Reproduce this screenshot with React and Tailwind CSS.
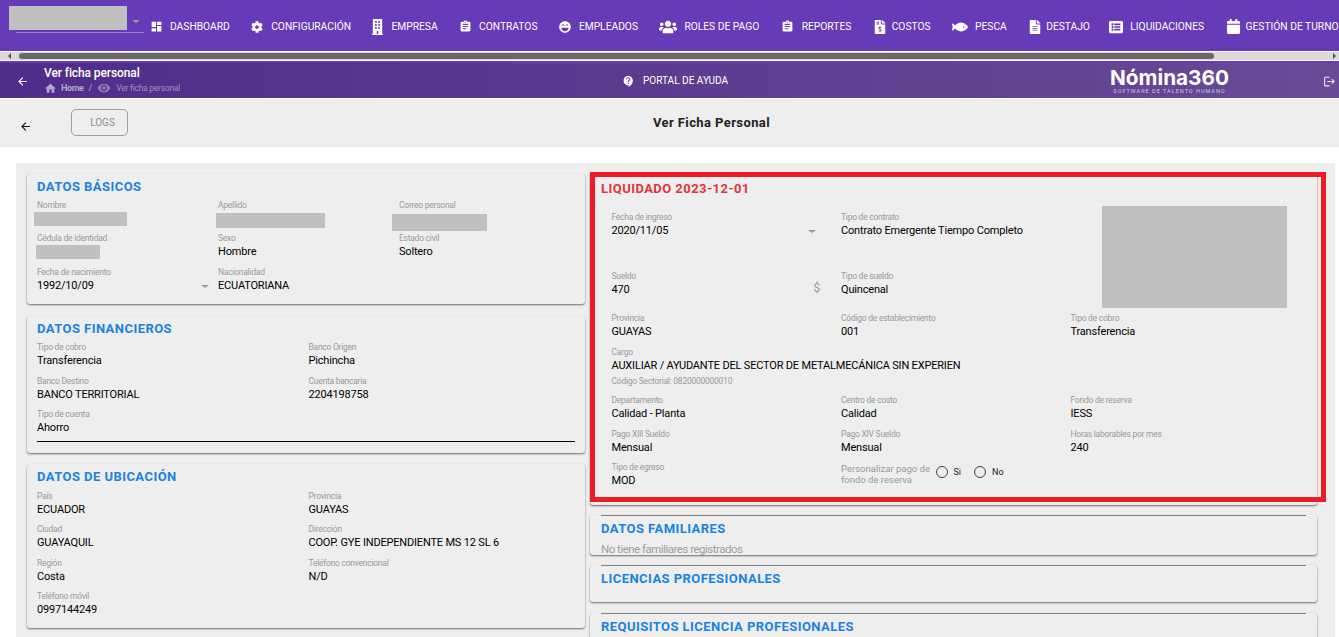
import { FaBuilding, FaCalendar, FaCog, FaFileAlt, FaFileInvoiceDollar, FaFish, FaLaughBeam, FaListAlt, FaUsers } from 'react-icons/fa';
import { MdArrowBack, MdAssignment, MdContactSupport, MdDashboard, MdHome, MdLogout, MdRemoveRedEye } from 'react-icons/md';

const navItems = [
    { label: 'DASHBOARD', icon: MdDashboard, size: 13, box: 'w-[20px]' },
    { label: 'CONFIGURACIÓN', icon: FaCog, size: 12, box: 'w-[20px]' },
    { label: 'EMPRESA', icon: FaBuilding, size: 15, box: 'w-[19px]', iconClass: 'w-[11px] h-[16px]' },
    { label: 'CONTRATOS', icon: MdAssignment, size: 13, box: 'w-[20px]' },
    { label: 'EMPLEADOS', icon: FaLaughBeam, size: 12, box: 'w-[20px]' },
    { label: 'ROLES DE PAGO', icon: FaUsers, size: 18, box: 'w-[25px]' },
    { label: 'REPORTES', icon: MdAssignment, size: 13, box: 'w-[21px]' },
    { label: 'COSTOS', icon: FaFileInvoiceDollar, size: 14, box: 'w-[19px]' },
    { label: 'PESCA', icon: FaFish, size: 16, box: 'w-[23px]' },
    { label: 'DESTAJO', icon: FaFileAlt, size: 14, box: 'w-[18px]' },
    { label: 'LIQUIDACIONES', icon: FaListAlt, size: 14, box: 'w-[21px] -ml-[2px]' },
    { label: 'GESTIÓN DE TURNOS', icon: FaCalendar, size: 15, box: 'w-[20px]' },
];

const Field = ({ label, value, children }) => (
    <div className="min-w-0">
        <div className="text-[8.5px] tracking-[-0.25px] leading-[13px] text-[#9a9a9a] whitespace-nowrap">{label}</div>
        {value && <div className="text-[11px] tracking-[-0.18px] leading-[13px] text-black whitespace-nowrap">{value}</div>}
        {children}
    </div>
);

const Title = ({ children, red }) => (
    <div className={`text-[13px] font-bold tracking-[0.45px] whitespace-nowrap ${red ? 'text-[#e2343c]' : 'text-[#1a82e2]'}`}>{children}</div>
);

const Caret = ({ className }) => (
    <div className={`absolute w-0 h-0 border-x-[4px] border-x-transparent border-t-[3px] border-t-[#9a9a9a] ${className}`} />
);

const cardShadow = 'shadow-[0_1px_2px_rgba(0,0,0,0.55)]';

const Radio = ({ label }) => (
    <div className="flex items-center gap-[6px]">
        <div className="w-[12px] h-[12px] rounded-full border border-[#444]" />
        <span className="text-[9px] text-[#222]">{label}</span>
    </div>
);

const SmallCard = ({ title, height, children }) => (
    <div className={`bg-[#eeeeee] rounded-[3px] overflow-hidden ${cardShadow} ${height}`}>
        <div className="mx-[11px] h-[26px] border-t border-[#808080] flex items-center">
            <Title>{title}</Title>
        </div>
        {children}
    </div>
);

export default function App() {
    return (
        <div className="h-screen overflow-hidden bg-white font-['Roboto',sans-serif]">
            {/* menu */}
            <div className="h-[51px] bg-[#673ab7] flex overflow-hidden">
                <div className="w-[150px] shrink-0 relative pl-[9px] pt-[6px]">
                    <div className="w-[118px] h-[24px] bg-[#c0c0c0]" />
                    <div className="ml-[7px] mt-[2px] w-[128px] h-px bg-[#9b86c9]" />
                    <Caret className="left-[132px] top-[20px]" />
                </div>
                <div className="flex items-center gap-[21.4px] h-[53px] whitespace-nowrap">
                    {navItems.map((item) => (
                        <div key={item.label} className="flex items-center text-white text-[10.25px]">
                            <div className={`${item.box} shrink-0`}>
                                <item.icon size={item.size} className={item.iconClass} preserveAspectRatio={item.iconClass ? 'none' : undefined} />
                            </div>
                            <span>{item.label}</span>
                        </div>
                    ))}
                </div>
            </div>

            {/* scrollbar */}
            <div className="h-[10px] bg-[#d9d9d9] border-y border-white flex items-center pl-[8px] pr-[3px]">
                <div className="w-0 h-0 border-y-[3px] border-y-transparent border-r-[3px] border-r-[#555]" />
                <div className="ml-[8px] w-[1195px] h-[6px] rounded-full bg-[#686868]" />
                <div className="ml-auto w-0 h-0 border-y-[3px] border-y-transparent border-l-[3px] border-l-[#555]" />
            </div>
            <div className="h-[2px] bg-[#673ab7]" />

            {/* page header */}
            <div className="h-[35px] bg-gradient-to-r from-[#4f2d8a] to-[#684a96] flex items-center text-white relative">
                <div className="w-[44px] pl-[16px] shrink-0">
                    <MdArrowBack size={13} className="mt-[2px]" />
                </div>
                <div className="w-[577px] shrink-0">
                    <div className="text-[12px] font-medium leading-[14px] tracking-[-0.1px]">Ver ficha personal</div>
                    <div className="flex items-center text-[9px] leading-[12px] text-[#b4a9cb] mt-[1px]">
                        <MdHome size={13} />
                        <span className="ml-[4px] font-bold tracking-[-0.4px]">Home</span>
                        <span className="mx-[5px]">/</span>
                        <MdRemoveRedEye size={14} className="text-[#8f7fb0]" />
                        <span className="ml-[5px] text-[8.5px] tracking-[-0.25px] text-[#9d8fbb]">Ver ficha personal</span>
                    </div>
                </div>
                <div className="w-[22px] shrink-0 pl-[1px]">
                    <MdContactSupport size={13} className="mt-[1px]" />
                </div>
                <div className="w-[467px] shrink-0 text-[10px] tracking-[0.02px]">PORTAL DE AYUDA</div>
                <div className="w-[190px] shrink-0">
                    <div className="w-[119px] text-center font-['Inter',sans-serif] font-bold text-[20.75px] leading-[21px]">Nómina360</div>
                    <div className="w-[119px] text-center text-[5.5px] leading-[7px] tracking-[1px] text-[#cfc7de] whitespace-nowrap">SOFTWARE DE TALENTO HUMANO</div>
                </div>
                <MdLogout size={13} className="absolute left-[1323px] top-[12px] text-[#dfe9f7]" />
            </div>
            <div className="h-px bg-white" />

            {/* toolbar */}
            <div className="h-[48px] bg-[#eeeeee] flex items-center relative">
                <MdArrowBack size={13} className="ml-[19px] mt-[6px] text-[#111]" />
                <div className="ml-[39px] -mt-[1px] w-[57px] h-[27px] rounded-[5px] border border-[#9e9e9e] flex items-center justify-center pl-[6px] text-[10px] text-[#8f8f8f]">LOGS</div>
                <div className="absolute left-[653px] top-[15px] text-[13px] font-bold text-[#222] tracking-[0.4px] leading-[17px]">Ver Ficha Personal</div>
            </div>

            {/* content */}
            <div className="mt-[16px] ml-[16px] w-[1319px] h-[474px] bg-[#eeeeee] pl-[11px] pt-[9px] flex gap-[5px] overflow-hidden">
                <div className="w-[558px] shrink-0 pt-[2px] flex flex-col gap-[11.5px]">
                    <div className={`h-[130px] bg-[#eeeeee] rounded-[3px] px-[10px] ${cardShadow}`}>
                        <div className="h-[24.5px] flex items-center"><Title>DATOS BÁSICOS</Title></div>
                        <div className="grid grid-cols-[181px_181px_181px] auto-rows-[33.5px]">
                            <Field label="Nombre"><div className="-ml-[3px] w-[93px] h-[14px] bg-[#c0c0c0]" /></Field>
                            <Field label="Apellido"><div className="-ml-[2px] mt-px w-[109px] h-[15px] bg-[#c0c0c0]" /></Field>
                            <Field label="Correo personal"><div className="-ml-[7px] mt-[2px] w-[95px] h-[17px] bg-[#c0c0c0]" /></Field>
                            <Field label="Cédula de identidad"><div className="-ml-[1px] w-[64px] h-[14px] bg-[#c0c0c0]" /></Field>
                            <Field label="Sexo" value="Hombre" />
                            <Field label="Estado civil" value="Soltero" />
                            <div className="relative">
                                <Field label="Fecha de nacimiento" value="1992/10/09" />
                                <Caret className="left-[164px] top-[19px]" />
                            </div>
                            <Field label="Nacionalidad" value="ECUATORIANA" />
                        </div>
                    </div>

                    <div className={`h-[137px] bg-[#eeeeee] rounded-[3px] px-[10px] ${cardShadow}`}>
                        <div className="h-[25.5px] flex items-center pt-[1px]"><Title>DATOS FINANCIEROS</Title></div>
                        <div className="grid grid-cols-[271.5px_1fr] auto-rows-[33.5px]">
                            <Field label="Tipo de cobro" value="Transferencia" />
                            <Field label="Banco Origen" value="Pichincha" />
                            <Field label="Banco Destino" value="BANCO TERRITORIAL" />
                            <Field label="Cuenta bancaria" value="2204198758" />
                            <Field label="Tipo de cuenta" value="Ahorro" />
                        </div>
                        <div className="-mt-[1px] h-px bg-black" />
                    </div>

                    <div className={`h-[164px] bg-[#eeeeee] rounded-[3px] px-[10px] ${cardShadow}`}>
                        <div className="h-[25px] flex items-center"><Title>DATOS DE UBICACIÓN</Title></div>
                        <div className="mt-px grid grid-cols-[271.5px_1fr] auto-rows-[33.25px]">
                            <Field label="País" value="ECUADOR" />
                            <Field label="Provincia" value="GUAYAS" />
                            <Field label="Ciudad" value="GUAYAQUIL" />
                            <Field label="Dirección" value="COOP. GYE INDEPENDIENTE MS 12 SL 6" />
                            <Field label="Región" value="Costa" />
                            <Field label="Teléfono convencional" value="N/D" />
                            <Field label="Teléfono móvil" value="0997144249" />
                        </div>
                    </div>
                </div>

                <div className="w-[727px] shrink-0 flex flex-col gap-[10px]">
                    <div className={`relative h-[333px] shrink-0 bg-[#eeeeee] rounded-[3px] ${cardShadow}`}>
                        <div className="pl-[11px] h-[33px] flex items-center"><Title red>LIQUIDADO 2023-12-01</Title></div>
                        <div className="mt-[5.5px] pl-[21.5px]">
                            <div className="grid grid-cols-[229.5px_229.5px_229.5px] grid-rows-[59px_42px_34px]">
                                <div className="relative">
                                    <Field label="Fecha de ingreso" value="2020/11/05" />
                                    <Caret className="left-[196px] top-[19px]" />
                                </div>
                                <Field label="Tipo de contrato" value="Contrato Emergente Tiempo Completo" />
                                <div className="row-span-2 -mt-[4.5px] ml-[31px] w-[185px] h-[102px] bg-[#c0c0c0]" />
                                <div className="relative">
                                    <Field label="Sueldo" value="470" />
                                    <span className="absolute left-[202px] top-[12px] text-[12px] leading-[13px] text-[#9a9a9a]">$</span>
                                </div>
                                <Field label="Tipo de sueldo" value="Quincenal" />
                                <Field label="Provincia" value="GUAYAS" />
                                <Field label="Código de establecimiento" value="001" />
                                <Field label="Tipo de cobro" value="Transferencia" />
                            </div>
                            <Field label="Cargo" value="AUXILIAR / AYUDANTE DEL SECTOR DE METALMECÁNICA SIN EXPERIEN" />
                            <div className="mt-[3px] text-[8.5px] tracking-[-0.25px] leading-[13px] text-[#9a9a9a]">Código Sectorial: 0820000000010</div>
                            <div className="mt-[6px] grid grid-cols-[229.5px_229.5px_229.5px] grid-rows-[34px_33px_33px]">
                                <Field label="Departamento" value="Calidad - Planta" />
                                <Field label="Centro de costo" value="Calidad" />
                                <Field label="Fondo de reserva" value="IESS" />
                                <Field label="Pago XIII Sueldo" value="Mensual" />
                                <Field label="Pago XIV Sueldo" value="Mensual" />
                                <Field label="Horas laborables por mes" value="240" />
                                <Field label="Tipo de egreso" value="MOD" />
                                <div className="flex items-start">
                                    <div className="w-[94.5px] text-[9.5px] leading-[11px] text-[#9a9a9a] mt-[2.5px]">Personalizar pago de fondo de reserva</div>
                                    <div className="flex gap-[13px] mt-[5px]">
                                        <Radio label="Si" />
                                        <Radio label="No" />
                                    </div>
                                </div>
                            </div>
                        </div>
                        <div className="absolute left-0 top-0 w-[736px] h-[330px] border-[5px] border-[#ed1c24]" />
                    </div>

                    <SmallCard title="DATOS FAMILIARES" height="h-[40px] shrink-0">
                        <div className="mx-[11px] mt-[1px] text-[11.5px] tracking-[-0.5px] leading-[14px] text-[#9e9e9e]">No tiene familiares registrados</div>
                    </SmallCard>
                    <SmallCard title="LICENCIAS PROFESIONALES" height="h-[37px] shrink-0" />
                    <div className="mt-px">
                        <SmallCard title="REQUISITOS LICENCIA PROFESIONALES" height="h-[60px]" />
                    </div>
                </div>
            </div>
        </div>
    );
}
